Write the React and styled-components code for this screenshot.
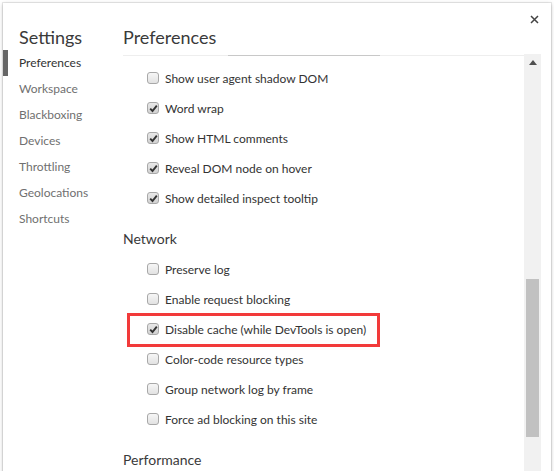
import styled, { createGlobalStyle } from "styled-components";

const GlobalStyle = createGlobalStyle`
    html, body {
        margin: 0;
        padding: 0;
        background: #ffffff;
        overflow: hidden;
    }
    body {
        font-family: "Lato", "Liberation Sans", sans-serif;
    }
`;

const MENU = ["Preferences", "Workspace", "Blackboxing", "Devices", "Throttling", "Geolocations", "Shortcuts"];

const ELEMENTS = [
    { label: "Show user agent shadow DOM", checked: false },
    { label: "Word wrap", checked: true },
    { label: "Show HTML comments", checked: true },
    { label: "Reveal DOM node on hover", checked: true },
    { label: "Show detailed inspect tooltip", checked: true },
];

const NETWORK = [
    { label: "Preserve log", checked: false },
    { label: "Enable request blocking", checked: false },
    { label: "Disable cache (while DevTools is open)", checked: true, marked: true },
    { label: "Color-code resource types", checked: false },
    { label: "Group network log by frame", checked: false },
    { label: "Force ad blocking on this site", checked: false },
];

const Page = styled.div`
    padding: 3px 3px 0 3px;
    height: 471px;
    box-sizing: border-box;
`;
const Dialog = styled.div`
    display: flex;
    width: 548px;
    height: 490px;
    background: #ffffff;
    box-shadow: 0 0 0 1px rgba(0, 0, 0, 0.08), 0 1px 4px rgba(0, 0, 0, 0.25);
`;
const Sidebar = styled.div`
    width: 120px;
    flex-shrink: 0;
    display: flex;
    flex-direction: column;
`;
const Title = styled.div`
    font-size: 18px;
    color: #3a3a3a;
    line-height: 24px;
    padding: 22px 0 0 16px;
    height: 25px;
`;
const PageTitle = styled(Title)`
    padding-left: 0;
`;
const Menu = styled.div`
    display: flex;
    flex-direction: column;
`;
const MenuItem = styled.div`
    height: 26px;
    line-height: 26px;
    font-size: 12px;
    padding-left: 11px;
    color: ${(p) => (p.$active ? "#333" : "#707070")};
    border-left: 5px solid ${(p) => (p.$active ? "#666" : "transparent")};
`;
const Main = styled.div`
    flex: 1;
    display: flex;
    flex-direction: column;
    min-width: 0;
`;
const Header = styled.div`
    display: flex;
    justify-content: space-between;
    height: 52px;
    border-bottom: 1px solid #eeeeee;
    margin-right: 27px;
    position: relative;
`;
const Close = styled.div`
    position: absolute;
    right: -18px;
    top: 8px;
    width: 16px;
    height: 16px;
    display: flex;
    align-items: center;
    justify-content: center;
`;
const Body = styled.div`
    flex: 1;
    display: flex;
    padding-right: 10px;
    min-height: 0;
`;
const Content = styled.div`
    flex: 1;
    position: relative;
    padding-top: 7px;
`;
const Sliver = styled.div`
    position: absolute;
    left: 105px;
    top: -1px;
    width: 152px;
    height: 1px;
    background: #c8c8c8;
`;
const Group = styled.div`
    display: flex;
    flex-direction: column;
`;
const Row = styled.div`
    position: relative;
    display: flex;
    align-items: center;
    height: 30px;
    padding-left: 24px;
`;
const Marker = styled.div`
    position: absolute;
    left: 4px;
    top: -1px;
    width: 247px;
    height: 28px;
    border: 3px solid #f23a3a;
`;
const Box = styled.span`
    width: 12px;
    height: 12px;
    box-sizing: border-box;
    border: 1px solid #a8a8a8;
    border-radius: 3px;
    background: ${(p) => (p.$checked ? "linear-gradient(#e8e8e8, #d2d2d2)" : "linear-gradient(#f6f6f6, #e2e2e2)")};
    display: flex;
    align-items: center;
    justify-content: center;
    margin-right: 6px;
`;
const Label = styled.span`
    font-size: 12px;
    color: #333;
    white-space: nowrap;
`;
const Section = styled.div`
    font-size: 14px;
    color: #3a3a3a;
    line-height: 20px;
    padding: 16px 0 5px 0;
`;
const Scrollbar = styled.div`
    width: 17px;
    margin-top: -2px;
    background: #f1f1f1;
    display: flex;
    flex-direction: column;
    align-items: center;
`;
const Arrow = styled.div`
    height: 17px;
    display: flex;
    align-items: center;
    justify-content: center;
`;
const Thumb = styled.div`
    width: 13px;
    height: 158px;
    margin-top: 208px;
    background: #c1c1c1;
`;

const CheckBox = ({ checked }) => (
    <Box $checked={checked}>
        {checked && (
            <svg width="9" height="9" viewBox="0 0 9 9">
                <path d="M1.2 4.6 L3.5 7 L7.8 1.6" fill="none" stroke="#333" strokeWidth="1.9" />
            </svg>
        )}
    </Box>
);

const SettingRow = ({ label, checked, marked }) => (
    <Row>
        {marked && <Marker />}
        <CheckBox checked={checked} />
        <Label>{label}</Label>
    </Row>
);

const App = () => {
    return (
        <Page>
            <GlobalStyle />
            <Dialog>
                <Sidebar>
                    <Title>Settings</Title>
                    <Menu>
                        {MENU.map((item, i) => (
                            <MenuItem key={item} $active={i === 0}>
                                {item}
                            </MenuItem>
                        ))}
                    </Menu>
                </Sidebar>
                <Main>
                    <Header>
                        <PageTitle>Preferences</PageTitle>
                        <Close>
                            <svg width="9" height="9" viewBox="0 0 9 9">
                                <path d="M1 1 L8 8 M8 1 L1 8" stroke="#444" strokeWidth="1.5" />
                            </svg>
                        </Close>
                    </Header>
                    <Body>
                        <Content>
                            <Sliver />
                            <Group>
                                {ELEMENTS.map((r) => (
                                    <SettingRow key={r.label} {...r} />
                                ))}
                            </Group>
                            <Section>Network</Section>
                            <Group>
                                {NETWORK.map((r) => (
                                    <SettingRow key={r.label} {...r} />
                                ))}
                            </Group>
                            <Section>Performance</Section>
                        </Content>
                        <Scrollbar>
                            <Arrow>
                                <svg width="8" height="5" viewBox="0 0 8 5">
                                    <path d="M0 5 L4 0 L8 5 Z" fill="#505050" />
                                </svg>
                            </Arrow>
                            <Thumb />
                        </Scrollbar>
                    </Body>
                </Main>
            </Dialog>
        </Page>
    );
};
export default App;
